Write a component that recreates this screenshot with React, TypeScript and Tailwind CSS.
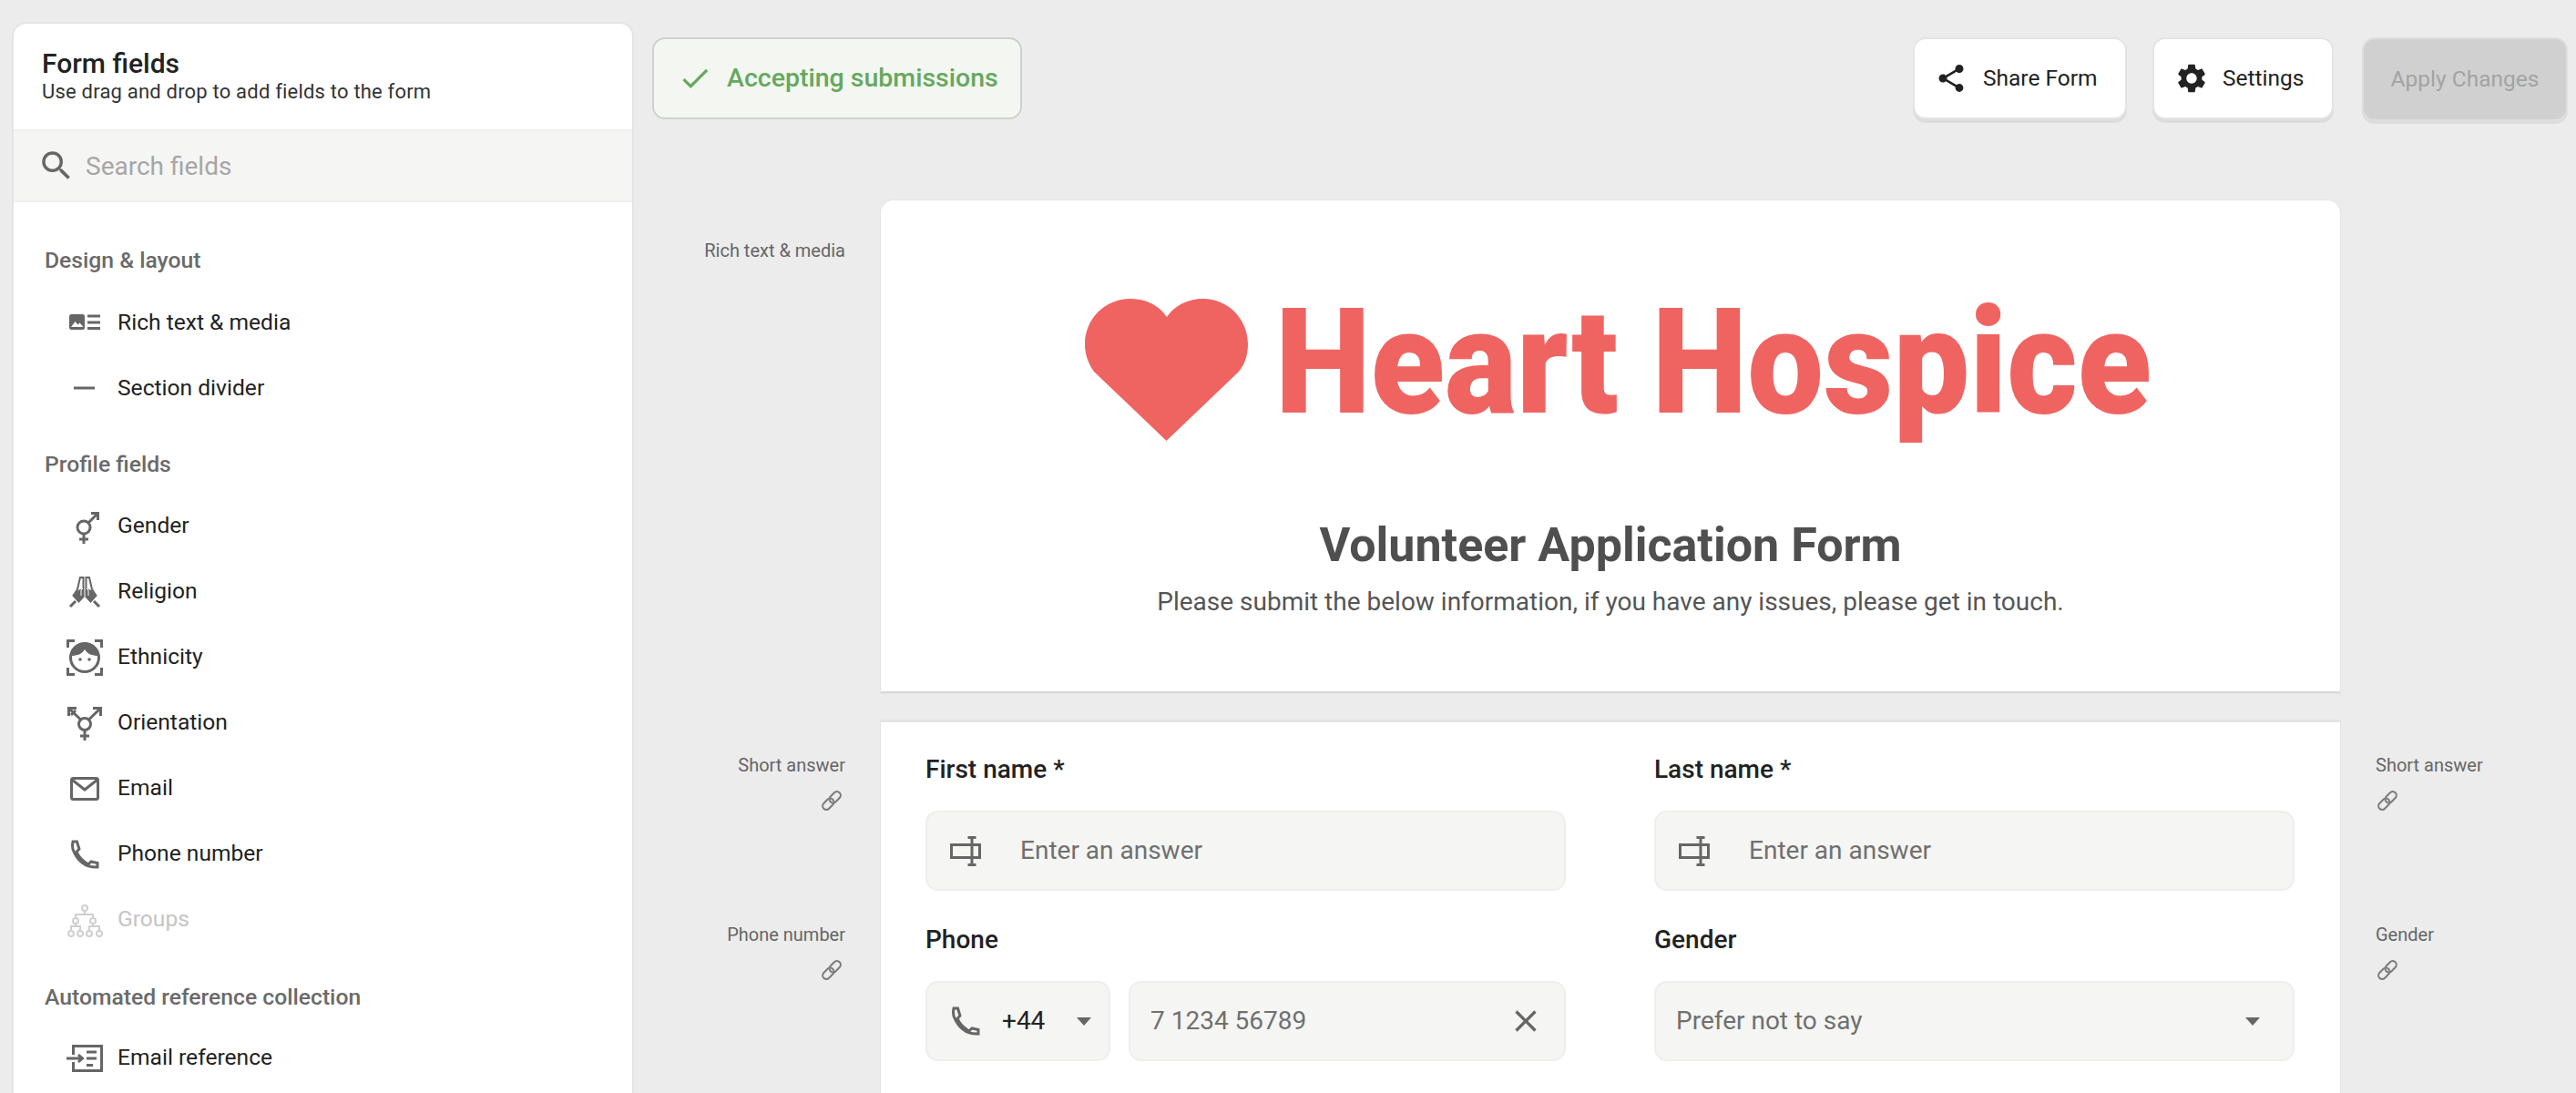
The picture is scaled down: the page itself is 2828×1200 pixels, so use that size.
import { ReactNode } from 'react';
import { MdCheck, MdClose, MdSearch, MdSettings, MdShare } from 'react-icons/md';

const G = '#666666';

function Svg({ children, color = G, size = 48 }: { children: ReactNode; color?: string; size?: number }) {
  return (
    <svg width={size} height={size} viewBox="0 0 48 48" fill="none" stroke={color} strokeWidth={3} className="shrink-0">
      {children}
    </svg>
  );
}

function RichIcon() {
  return (
    <Svg>
      <rect x="7" y="15" width="17" height="17" rx="2.5" fill={G} stroke="none" />
      <path d="M9 29l4.500-6 3 3.500 2-2 4 4.500z" fill="#fff" stroke="none" />
      <path d="M27 17h14M27 24h14M27 30.500h14" />
    </Svg>
  );
}

function DividerIcon() {
  return (
    <Svg>
      <path d="M12 24h23" />
    </Svg>
  );
}

function GenderIcon() {
  return (
    <Svg>
      <circle cx="23" cy="25" r="7" />
      <path d="M28 20L38 10M31 9.500h7.500V17M23 32v11M18 38h10" />
    </Svg>
  );
}

function PrayIcon() {
  return (
    <Svg>
      <path d="M22.500 8h-3.500L16 21l-4.500 7 6 6.500 5-5.500z" strokeWidth={2} />
      <path d="M25.500 8h3.500L32 21l4.500 7-6 6.500-5-5.500z" strokeWidth={2} />
      <path d="M16.500 22l-4.500 6 5.500 6 5-5.500V20z" fill={G} stroke="none" />
      <path d="M31.500 22l4.500 6-5.500 6-5-5.500V20z" fill={G} stroke="none" />
      <path d="M8 40l6-6M40 40l-6-6" />
      <path d="M22 20l-2 2v6M26 20l2 2v6" stroke="#fff" strokeWidth={1} />
    </Svg>
  );
}

function FaceIcon() {
  return (
    <Svg>
      <path d="M5.500 13V5.500H13M35 5.500h7.500V13M5.500 35v7.500H13M35 42.500h7.500V35" />
      <circle cx="24" cy="24" r="15.500" />
      <path d="M9 22c0-9 7-14 15-14s15 5 15 14c-7 0-12-2-15-7-3 5-8 7-15 7z" fill={G} stroke="none" />
      <circle cx="19" cy="26" r="1.800" fill={G} stroke="none" />
      <circle cx="29" cy="26" r="1.800" fill={G} stroke="none" />
    </Svg>
  );
}

function TransIcon() {
  return (
    <Svg>
      <circle cx="24" cy="25" r="6.500" />
      <path d="M28.500 20L41 8M33 7.500h8.500V16M19.500 20L7 8M15 7.500H6.500V16M24 32v11M19 38h10M9 15l5-5" />
    </Svg>
  );
}

function MailIcon() {
  return (
    <Svg>
      <rect x="9.500" y="12.500" width="29" height="23" rx="2" />
      <path d="M10 14l14 11 14-11" />
    </Svg>
  );
}

function PhoneIcon() {
  return (
    <Svg>
      <path d="M11 10h4.500q1.500 5.500 2.500 8l-3 3.500q4 8.500 13 13.500l3-3 7 1.500v4.500q-19 1-27-19.500-1-5 0-8.500z" />
    </Svg>
  );
}

function TreeIcon() {
  return (
    <Svg color="#cfcfcf">
      <g strokeWidth={2}>
        <circle cx="24" cy="11" r="3" />
        <circle cx="14" cy="25" r="3" />
        <circle cx="33" cy="25" r="3" />
        <circle cx="9" cy="39" r="3" />
        <circle cx="19" cy="39" r="3" />
        <circle cx="29" cy="39" r="3" />
        <circle cx="40" cy="39" r="3" />
        <path d="M24 14v4M14 22v-4h19v4M14 28v3M33 28v3M9 36v-5h10v5M29 36v-5h11v5" />
      </g>
    </Svg>
  );
}

function EmailRefIcon() {
  return (
    <Svg>
      <path d="M11.500 20v-9.500h31v27h-31V28" />
      <path d="M4 24h17M17 20l4.500 4-4.500 4M26 17h11M26 24h11M26 31.500h7" />
    </Svg>
  );
}

function AnswerIcon() {
  return (
    <Svg>
      <rect x="8.500" y="17.500" width="31" height="14" />
      <path d="M31 10v29M26.500 9.500h9M26.500 39.500h9" />
    </Svg>
  );
}

function LinkIcon() {
  return (
    <svg width="28" height="28" viewBox="0 0 24 24" fill="none" stroke="#7d7d7d" strokeWidth={1.800}>
      <g transform="rotate(-45 12 12)">
        <rect x="1.500" y="8.500" width="12" height="7" rx="3.500" />
        <rect x="10.500" y="8.500" width="12" height="7" rx="3.500" />
      </g>
    </svg>
  );
}

function Caret() {
  return <span className="w-0 h-0 border-x-[8px] border-x-transparent border-t-[9px] border-t-[#666666] shrink-0" />;
}

function FieldRow({ icon, label, disabled }: { icon: ReactNode; label: string; disabled?: boolean }) {
  return (
    <div className="flex items-center h-[72px] pl-[54px] gap-3">
      {icon}
      <span className={`text-[24.6px] ${disabled ? 'text-[#c4c4c4]' : 'text-[#222222]'}`}>{label}</span>
    </div>
  );
}

function GroupHeading({ children, first, last }: { children: ReactNode; first?: boolean; last?: boolean }) {
  const spacing = first ? 'mt-[49px] mb-[17px]' : last ? 'mt-[34px] mb-[16px]' : 'mt-[33px] mb-[16.500px]';
  return (
    <div className={`h-[30px] pl-[34px] flex items-center text-[24.7px] font-medium text-[#6a6a6a] ${spacing}`}>
      {children}
    </div>
  );
}

function Sidebar() {
  return (
    <aside className="w-[683px] h-[1400px] shrink-0 ml-[13px] mt-[24px] bg-white border-2 border-[#e4e4e4] rounded-t-[16px] overflow-hidden">
      <div className="h-[116px] pl-[31px] pt-[26px]">
        <div className="text-[30px] leading-[36px] font-medium text-[#222222]">Form fields</div>
        <div className="text-[22px] leading-[26px] tracking-[0.2px] text-[#333333]">Use drag and drop to add fields to the form</div>
      </div>
      <div className="h-[80px] flex items-center pl-[26px] gap-[11px] bg-[#f5f5f3] border-y-2 border-[#eeeeec]">
        <MdSearch size={42} color={G} />
        <span className="text-[28px] leading-[36px] pt-[2px] text-[#a6a6a6]">Search fields</span>
      </div>
      <GroupHeading first>Design &amp; layout</GroupHeading>
      <FieldRow icon={<RichIcon />} label="Rich text & media" />
      <FieldRow icon={<DividerIcon />} label="Section divider" />
      <GroupHeading>Profile fields</GroupHeading>
      <FieldRow icon={<GenderIcon />} label="Gender" />
      <FieldRow icon={<PrayIcon />} label="Religion" />
      <FieldRow icon={<FaceIcon />} label="Ethnicity" />
      <FieldRow icon={<TransIcon />} label="Orientation" />
      <FieldRow icon={<MailIcon />} label="Email" />
      <FieldRow icon={<PhoneIcon />} label="Phone number" />
      <FieldRow icon={<TreeIcon />} label="Groups" disabled />
      <GroupHeading last>Automated reference collection</GroupHeading>
      <FieldRow icon={<EmailRefIcon />} label="Email reference" />
    </aside>
  );
}

function TopBar() {
  return (
    <div className="flex items-start h-[96px] pr-[9px]">
      <div className="w-[406px] h-[90px] flex items-center pl-[26px] gap-[16px] bg-[#f3f6f1] border-2 border-[#d0d0d0] rounded-[14px]">
        <MdCheck size={38} color="#66a85e" />
        <span className="text-[28.500px] font-medium text-[#66a85e]">Accepting submissions</span>
      </div>
      <button className="ml-auto w-[235px] h-[90px] flex items-center pl-[22px] gap-[17px] bg-white rounded-[14px] border-2 border-[#e4e4e4] shadow-[0_4px_0_#dcdcdc] text-[24.500px] text-[#222222]">
        <MdShare size={36} />
        Share Form
      </button>
      <button className="ml-[28px] w-[199px] h-[90px] flex items-center pl-[22px] gap-[15px] bg-white rounded-[14px] border-2 border-[#e4e4e4] shadow-[0_4px_0_#dcdcdc] text-[24.500px] text-[#222222]">
        <MdSettings size={38} />
        Settings
      </button>
      <button className="ml-[31px] w-[226px] h-[92px] flex items-center justify-center bg-[#d0d0d0] rounded-[14px] border-2 border-[#dedede] shadow-[0_3px_0_#dcdcdc] text-[24.500px] text-[#a3a3a3]">
        Apply Changes
      </button>
    </div>
  );
}

function SideNote({ label, align }: { label: string; align: 'left' | 'right' }) {
  return (
    <div className={`h-[186px] flex flex-col ${align === 'right' ? 'items-end' : 'items-start'}`}>
      <div className="h-[30px] mt-[1px] flex items-center text-[20px] text-[#666666]">{label}</div>
      <div className={`mt-[10px] ${align === 'right' ? 'mr-[1px]' : 'ml-[-1px]'}`}>
        <LinkIcon />
      </div>
    </div>
  );
}

function Label({ children }: { children: ReactNode }) {
  return <div className="h-[40px] pt-[2px] flex items-center text-[28px] font-medium text-[#222222]">{children}</div>;
}

const boxClass = 'h-[88px] bg-[#f5f5f3] border-2 border-[#eeeeec] rounded-[14px] flex items-center text-[28px]';

function AnswerField({ label }: { label: string }) {
  return (
    <div>
      <Label>{label}</Label>
      <div className={`${boxClass} mt-[26px] pl-[18px] gap-[38px] text-[#707070]`}>
        <AnswerIcon />
        <span className="ml-[-2px]">Enter an answer</span>
      </div>
    </div>
  );
}

function FormCards() {
  return (
    <div className="flex-1 min-w-0">
      <div className="flex">
        <div className="w-[212px] shrink-0 pt-[40px] flex justify-end">
          <div className="h-[30px] flex items-center text-[20px] text-[#666666]">Rich text &amp; media</div>
        </div>
        <div className="w-[1602px] shrink-0 ml-[39px] h-[541px] bg-white border-b-2 border-[#d8d8d8] rounded-t-[14px] shadow-[0_0_0_1px_#e4e4e4] text-center">
          <div className="flex justify-center pl-[13px] pt-[108px]">
            <svg width="179" height="156" viewBox="0 0 179 156" className="shrink-0">
              <path
                d="M89.500 156L10 80C3 70 0 60 0 50C0 22 22 0 50 0C68 0 82 8 90 20C98 8 112 0 130 0C157 0 179 22 179 50C179 60 176 72 169 80Z"
                fill="#ef6461"
              />
            </svg>
            <div className="w-[958px] ml-[30px] h-[156px] text-left">
              <span className="inline-block origin-left scale-x-[0.92] whitespace-nowrap text-[162px] leading-[140px] font-black text-[#ef6461]">
                Heart Hospice
              </span>
            </div>
          </div>
          <div className="mt-[85px] h-[60px] flex items-center justify-center text-[52px] font-bold text-[#4f4f4f]">Volunteer Application Form</div>
          <div className="mt-[12px] h-[40px] flex items-center justify-center text-[28px] text-[#555555]">
            Please submit the below information, if you have any issues, please get in touch.
          </div>
        </div>
      </div>

      <div className="flex mt-[30px]">
        <div className="w-[212px] shrink-0 pt-[33px]">
          <SideNote label="Short answer" align="right" />
          <SideNote label="Phone number" align="right" />
        </div>
        <div className="w-[1602px] h-[700px] shrink-0 ml-[39px] bg-white shadow-[0_0_0_1px_#e4e4e4] border-t-2 border-[#e4e4e4] px-[49px] pt-[31px]">
          <div className="grid grid-cols-[703px_703px] gap-x-[97px] gap-y-[33px]">
            <AnswerField label="First name *" />
            <AnswerField label="Last name *" />
            <div>
              <Label>Phone</Label>
              <div className="flex gap-[20px] mt-[26px]">
                <div className={`${boxClass} w-[203px] pl-[18px] text-[#222222]`}>
                  <PhoneIcon />
                  <span className="ml-[16px]">+44</span>
                  <span className="ml-[35px] flex">
                    <Caret />
                  </span>
                </div>
                <div className={`${boxClass} flex-1 pl-[22px] pr-[22px] justify-between text-[#707070]`}>
                  <span>7 1234 56789</span>
                  <MdClose size={40} color={G} />
                </div>
              </div>
            </div>
            <div>
              <Label>Gender</Label>
              <div className={`${boxClass} mt-[26px] pl-[22px] pr-[36px] justify-between text-[#707070]`}>
                <span>Prefer not to say</span>
                <Caret />
              </div>
            </div>
          </div>
        </div>
        <div className="w-[212px] shrink-0 ml-[39px] pt-[33px]">
          <SideNote label="Short answer" align="left" />
          <SideNote label="Gender" align="left" />
        </div>
      </div>
    </div>
  );
}

export default function App() {
  return (
    <div className="h-[1200px] w-[2828px] overflow-hidden flex bg-[#ececec] font-['Roboto',sans-serif]">
      <Sidebar />
      <main className="flex-1 min-w-0 ml-[20px] pt-[41px]">
        <TopBar />
        <div className="mt-[83px]">
          <FormCards />
        </div>
      </main>
    </div>
  );
}
